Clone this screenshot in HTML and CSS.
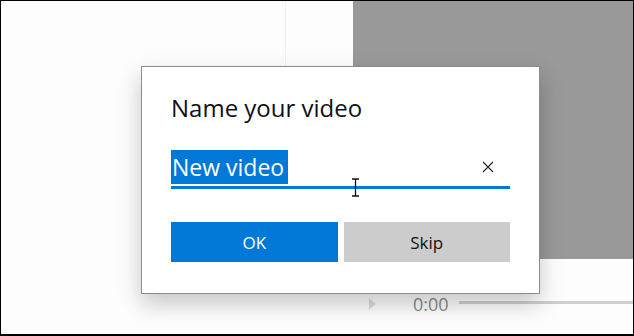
FILE: index.html
```html
<!DOCTYPE html>
<html lang="en">
<head>
  <meta charset="UTF-8" />
  <title>Name your video</title>
  <link rel="stylesheet" href="styles.css">
</head>
<body>

  <div class="frame">
    <!-- Editor behind the dialog -->
    <div class="app">
      <div class="top">
        <div class="library"></div>
        <div class="gutter"></div>
        <div class="preview"></div>
      </div>
      <div class="controls">
        <span class="play"></span>
        <span class="time">0:00</span>
        <span class="track"></span>
      </div>
    </div>

    <!-- Dialog -->
    <div class="dialog">
      <h2 class="title">Name your video</h2>
      <div class="field">
        <span class="selected">New video</span>
        <svg class="clear" width="12" height="12" viewBox="0 0 12 12">
          <path d="M1 1 L11 11 M11 1 L1 11" stroke="#222" stroke-width="1.1" fill="none"/>
        </svg>
      </div>
      <div class="actions">
        <button class="btn primary">OK</button>
        <button class="btn">Skip</button>
      </div>
    </div>

    <svg class="ibeam" width="9" height="19" viewBox="0 0 9 19">
      <path d="M1 1 H8 M1 18 H8 M4.5 1 V18" stroke="#111" stroke-width="1.3" fill="none"/>
    </svg>
  </div>

</body>
</html>
```

FILE: styles.css
```css
:root {
  --blue: #0078d7;
  --video: #999999;
}

* {
  margin: 0;
  padding: 0;
  box-sizing: border-box;
  font-family: 'Open Sans', 'Noto Sans', sans-serif;
}

body {
  background: #fff;
}

.frame {
  position: relative;
  width: 634px;
  height: 336px;
  border: 1px solid #000;
  border-bottom-width: 2px;
  overflow: hidden;
  background: #fdfdfd;
}

.app {
  display: flex;
  flex-direction: column;
  height: 100%;
}

.top {
  display: flex;
  height: 258px;
}

.library {
  flex: 0 0 284px;
}

.gutter {
  flex: 0 0 68px;
  border-left: 1px solid #f1f1f1;
}

.preview {
  flex: 1;
  background: var(--video);
}

.controls {
  flex: 1;
  display: flex;
  align-items: center;
  padding-left: 368px;
  padding-top: 14px;
}

.play {
  width: 0;
  height: 0;
  border-top: 6px solid transparent;
  border-bottom: 6px solid transparent;
  border-left: 7px solid #dcdcdc;
}

.time {
  margin-left: 37px;
  font-size: 18px;
  color: #8a8a8a;
}

.track {
  flex: 1;
  height: 3px;
  margin-left: 10px;
  margin-bottom: 3px;
  background: #cfcfcf;
}

.dialog {
  position: absolute;
  left: 140px;
  top: 65px;
  width: 399px;
  height: 228px;
  padding: 25px 29px 0;
  background: #fff;
  border: 1px solid #8c8c8c;
  box-shadow: 0 10px 22px rgba(0,0,0,0.22);
}

.title {
  font-size: 24px;
  line-height: 32px;
  font-weight: normal;
  color: #111;
}

.field {
  display: flex;
  align-items: center;
  justify-content: space-between;
  margin-top: 26px;
  padding-bottom: 2px;
  border-bottom: 3px solid var(--blue);
}

.selected {
  display: block;
  padding: 0 4px 0 1px;
  font-size: 23px;
  line-height: 34px;
  color: #fff;
  background: var(--blue);
}

.clear {
  margin-right: 16px;
}

.actions {
  display: flex;
  gap: 6px;
  margin-top: 33px;
}

.btn {
  flex: 1;
  height: 40px;
  border: none;
  background: #cccccc;
  color: #111;
  font-size: 17px;
}

.btn.primary {
  background: var(--blue);
  color: #fff;
}

.ibeam {
  position: absolute;
  left: 350px;
  top: 177px;
}
```
